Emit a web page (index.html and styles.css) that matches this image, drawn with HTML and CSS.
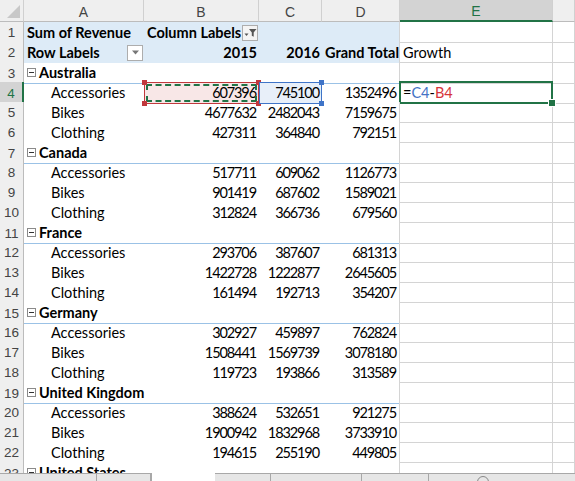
FILE: index.html
```html
<!DOCTYPE html>
<html lang="en">
<head>
  <meta charset="UTF-8" />
  <title>Pivot Table - Sum of Revenue</title>
  <link rel="stylesheet" href="styles.css">
</head>
<body>

  <div class="sheet">
    <!-- Column headers -->
    <div class="row heads">
      <div class="corner"><span class="corner-tri"></span></div>
      <div class="ch">A</div>
      <div class="ch">B</div>
      <div class="ch">C</div>
      <div class="ch">D</div>
      <div class="ch active">E</div>
      <div class="ch"></div>
    </div>

    <div class="row">
      <div class="rh">1</div>
      <div class="c pv bold">Sum of Revenue</div>
      <div class="c pv bold split">Column Labels
        <span class="pv-btn">
          <svg width="14" height="13" viewBox="0 0 14 13">
            <path d="M1.5 7.5h4l-2 2.5z" fill="#555"/>
            <path d="M6 3h7.5l-2.8 3.4v4.4l-1.9-1.1v-3.3z" fill="#555"/>
          </svg>
        </span>
      </div>
      <div class="c pv"></div>
      <div class="c pv last"></div>
      <div class="c grid"></div>
      <div class="c grid"></div>
    </div>

    <div class="row">
      <div class="rh">2</div>
      <div class="c pv bold split">Row Labels
        <span class="pv-btn down">
          <svg width="9" height="5" viewBox="0 0 9 5"><path d="M1 0.5h7l-3.5 4z" fill="#777"/></svg>
        </span>
      </div>
      <div class="c pv bold num">2015</div>
      <div class="c pv bold num">2016</div>
      <div class="c pv bold num last">Grand Total</div>
      <div class="c grid">Growth</div>
      <div class="c grid"></div>
    </div>

    <div class="row">
      <div class="rh">3</div>
      <div class="c country"><span class="minus"></span>Australia</div>
      <div class="c country"></div>
      <div class="c country"></div>
      <div class="c country last"></div>
      <div class="c grid"></div>
      <div class="c grid"></div>
    </div>
    <div class="row">
      <div class="rh sel">4</div>
      <div class="c item">Accessories</div>
      <div class="c num val ref-red">607396<i class="h tl"></i><i class="h tr"></i><i class="h bl"></i><i class="h br"></i></div>
      <div class="c num val ref-blue">745100<i class="h tr"></i><i class="h br"></i></div>
      <div class="c num val last">1352496</div>
      <div class="c grid editing">=<span class="f-blue">C4</span>-<span class="f-red">B4</span></div>
      <div class="c grid"></div>
    </div>
    <div class="row">
      <div class="rh">5</div>
      <div class="c item">Bikes</div>
      <div class="c num val">4677632</div>
      <div class="c num val">2482043</div>
      <div class="c num val last">7159675</div>
      <div class="c grid"></div>
      <div class="c grid"></div>
    </div>
    <div class="row">
      <div class="rh">6</div>
      <div class="c item">Clothing</div>
      <div class="c num val">427311</div>
      <div class="c num val">364840</div>
      <div class="c num val last">792151</div>
      <div class="c grid"></div>
      <div class="c grid"></div>
    </div>

    <div class="row">
      <div class="rh">7</div>
      <div class="c country"><span class="minus"></span>Canada</div>
      <div class="c country"></div>
      <div class="c country"></div>
      <div class="c country last"></div>
      <div class="c grid"></div>
      <div class="c grid"></div>
    </div>
    <div class="row">
      <div class="rh">8</div>
      <div class="c item">Accessories</div>
      <div class="c num val">517711</div>
      <div class="c num val">609062</div>
      <div class="c num val last">1126773</div>
      <div class="c grid"></div>
      <div class="c grid"></div>
    </div>
    <div class="row">
      <div class="rh">9</div>
      <div class="c item">Bikes</div>
      <div class="c num val">901419</div>
      <div class="c num val">687602</div>
      <div class="c num val last">1589021</div>
      <div class="c grid"></div>
      <div class="c grid"></div>
    </div>
    <div class="row">
      <div class="rh">10</div>
      <div class="c item">Clothing</div>
      <div class="c num val">312824</div>
      <div class="c num val">366736</div>
      <div class="c num val last">679560</div>
      <div class="c grid"></div>
      <div class="c grid"></div>
    </div>

    <div class="row">
      <div class="rh">11</div>
      <div class="c country"><span class="minus"></span>France</div>
      <div class="c country"></div>
      <div class="c country"></div>
      <div class="c country last"></div>
      <div class="c grid"></div>
      <div class="c grid"></div>
    </div>
    <div class="row">
      <div class="rh">12</div>
      <div class="c item">Accessories</div>
      <div class="c num val">293706</div>
      <div class="c num val">387607</div>
      <div class="c num val last">681313</div>
      <div class="c grid"></div>
      <div class="c grid"></div>
    </div>
    <div class="row">
      <div class="rh">13</div>
      <div class="c item">Bikes</div>
      <div class="c num val">1422728</div>
      <div class="c num val">1222877</div>
      <div class="c num val last">2645605</div>
      <div class="c grid"></div>
      <div class="c grid"></div>
    </div>
    <div class="row">
      <div class="rh">14</div>
      <div class="c item">Clothing</div>
      <div class="c num val">161494</div>
      <div class="c num val">192713</div>
      <div class="c num val last">354207</div>
      <div class="c grid"></div>
      <div class="c grid"></div>
    </div>

    <div class="row">
      <div class="rh">15</div>
      <div class="c country"><span class="minus"></span>Germany</div>
      <div class="c country"></div>
      <div class="c country"></div>
      <div class="c country last"></div>
      <div class="c grid"></div>
      <div class="c grid"></div>
    </div>
    <div class="row">
      <div class="rh">16</div>
      <div class="c item">Accessories</div>
      <div class="c num val">302927</div>
      <div class="c num val">459897</div>
      <div class="c num val last">762824</div>
      <div class="c grid"></div>
      <div class="c grid"></div>
    </div>
    <div class="row">
      <div class="rh">17</div>
      <div class="c item">Bikes</div>
      <div class="c num val">1508441</div>
      <div class="c num val">1569739</div>
      <div class="c num val last">3078180</div>
      <div class="c grid"></div>
      <div class="c grid"></div>
    </div>
    <div class="row">
      <div class="rh">18</div>
      <div class="c item">Clothing</div>
      <div class="c num val">119723</div>
      <div class="c num val">193866</div>
      <div class="c num val last">313589</div>
      <div class="c grid"></div>
      <div class="c grid"></div>
    </div>

    <div class="row">
      <div class="rh">19</div>
      <div class="c country"><span class="minus"></span>United Kingdom</div>
      <div class="c country"></div>
      <div class="c country"></div>
      <div class="c country last"></div>
      <div class="c grid"></div>
      <div class="c grid"></div>
    </div>
    <div class="row">
      <div class="rh">20</div>
      <div class="c item">Accessories</div>
      <div class="c num val">388624</div>
      <div class="c num val">532651</div>
      <div class="c num val last">921275</div>
      <div class="c grid"></div>
      <div class="c grid"></div>
    </div>
    <div class="row">
      <div class="rh">21</div>
      <div class="c item">Bikes</div>
      <div class="c num val">1900942</div>
      <div class="c num val">1832968</div>
      <div class="c num val last">3733910</div>
      <div class="c grid"></div>
      <div class="c grid"></div>
    </div>
    <div class="row">
      <div class="rh">22</div>
      <div class="c item">Clothing</div>
      <div class="c num val">194615</div>
      <div class="c num val">255190</div>
      <div class="c num val last">449805</div>
      <div class="c grid"></div>
      <div class="c grid"></div>
    </div>

    <div class="row">
      <div class="rh">23</div>
      <div class="c country"><span class="minus"></span>United States</div>
      <div class="c country"></div>
      <div class="c country"></div>
      <div class="c country last"></div>
      <div class="c grid"></div>
      <div class="c grid"></div>
    </div>
  </div>

  <!-- Sheet tabs / scrollbar strip -->
  <div class="tabbar">
    <div class="seg" style="width: 97px"></div>
    <div class="seg" style="width: 54px"></div>
    <div class="gap"></div>
    <div class="seg" style="width: 56px"></div>
    <div class="seg" style="width: 91px"></div>
    <div class="seg" style="width: 67px"></div>
    <div class="seg grow"><span class="knob"></span></div>
  </div>

</body>
</html>
```

FILE: styles.css
```css
* {
  box-sizing: border-box;
}

body {
  margin: 0;
  font-family: Lato, 'Liberation Sans', sans-serif;
  font-size: 14.5px;
  color: #000;
  background: #fff;
  overflow: hidden;
  width: 575px;
  height: 481px;
}

.sheet {
  height: 473px;
  overflow: hidden;
}

.row {
  display: grid;
  grid-template-columns: 24px 120px 115px 63px 78px 153px 1fr;
  height: 20px;
}

.row.heads {
  height: 22px;
}

/* Headers */
.corner,
.ch,
.rh {
  background-color: #efefef;
  color: #444;
  font-family: 'Liberation Sans', sans-serif;
  font-size: 14px;
  display: flex;
  align-items: center;
  justify-content: center;
}

.corner {
  border-right: 1px solid #d0d0d0;
  border-bottom: 1px solid #bcbcbc;
  position: relative;
}

.corner-tri {
  position: absolute;
  right: 3px;
  bottom: 3px;
  width: 0;
  height: 0;
  border-left: 13px solid transparent;
  border-bottom: 13px solid #c8c8c8;
}

.ch {
  border-right: 1px solid #d0d0d0;
  border-bottom: 1px solid #bcbcbc;
  padding-top: 2px;
}

.ch.active {
  background-color: #d3d3d3;
  color: #217346;
  border-bottom: 2px solid #217346;
}

.rh {
  border-right: 1px solid #bcbcbc;
  border-bottom: 1px solid #d0d0d0;
  font-size: 13.5px;
  padding-top: 1px;
}

.rh.sel {
  background-color: #d3d3d3;
  color: #217346;
  border-right: 2px solid #217346;
}

/* Cells */
.c {
  line-height: 21px;
  padding: 0 3px;
  white-space: nowrap;
  overflow: visible;
  position: relative;
}

.grid {
  border-right: 1px solid #d4d4d4;
  border-bottom: 1px solid #d4d4d4;
  overflow: hidden;
}

.last {
  border-right: 1px solid #d4d4d4;
}

.bold {
  font-weight: bold;
}

.num {
  text-align: right;
  padding-right: 2px;
}

.val {
  letter-spacing: -1.1px;
  padding-right: 3px;
}

.pv {
  background-color: #ddebf7;
}

.split {
  display: flex;
  align-items: center;
  justify-content: space-between;
  padding-right: 1px;
}

.pv-btn {
  width: 16px;
  height: 16px;
  border: 1px solid #adadad;
  background-color: #f4f4f4;
  display: flex;
  align-items: center;
  justify-content: center;
}

.pv-btn.down {
  background-color: #fff;
}

.country {
  font-weight: bold;
  border-bottom: 1px solid #9bc2e6;
  padding-left: 3px;
  display: flex;
  align-items: center;
}

.minus {
  width: 9px;
  height: 9px;
  border: 1px solid #8a8a8a;
  margin-right: 3px;
  position: relative;
  flex-shrink: 0;
}

.minus::after {
  content: '';
  position: absolute;
  left: 1px;
  right: 1px;
  top: 3px;
  height: 1px;
  background-color: #333;
}

.item {
  padding-left: 27px;
}

/* Formula reference highlights */
.ref-red {
  background-color: #f8e7e7;
  outline: 1px solid #c0383c;
  outline-offset: -1px;
}

.ref-red::before {
  content: '';
  position: absolute;
  inset: 2px;
  border: 2px dashed #217346;
  pointer-events: none;
}

.ref-blue {
  background-color: #e8eff9;
  outline: 1px solid #3f74c8;
  outline-offset: -1px;
}

.h {
  position: absolute;
  width: 5px;
  height: 5px;
  background-color: #c0383c;
}

.ref-blue .h {
  background-color: #3f74c8;
}

.h.tl { left: -2px; top: -2px; }
.h.tr { right: -2px; top: -2px; }
.h.bl { left: -2px; bottom: -2px; }
.h.br { right: -2px; bottom: -2px; }

.editing {
  overflow: visible;
}

.editing::after {
  content: '';
  position: absolute;
  left: -1px;
  top: -1px;
  right: -1px;
  bottom: -1px;
  border: 2px solid #217346;
}

.editing::before {
  content: '';
  position: absolute;
  right: -4px;
  bottom: -4px;
  width: 6px;
  height: 6px;
  background-color: #217346;
  border: 1px solid #fff;
  z-index: 2;
}

.f-blue {
  color: #4472c4;
}

.f-red {
  color: #d6343a;
}

/* Bottom strip */
.tabbar {
  display: flex;
  height: 8px;
}

.seg {
  background-color: #e6e6e6;
  border-top: 1px solid #a8a8a8;
  border-right: 1px solid #a8a8a8;
}

.seg.grow {
  flex: 1;
  border-right: none;
  position: relative;
}

.gap {
  width: 64px;
  background-color: #fff;
  border-left: 1px solid #a8a8a8;
}

.knob {
  position: absolute;
  left: 48px;
  top: 2px;
  width: 12px;
  height: 12px;
  border: 1px solid #888;
  border-radius: 50%;
}
```
